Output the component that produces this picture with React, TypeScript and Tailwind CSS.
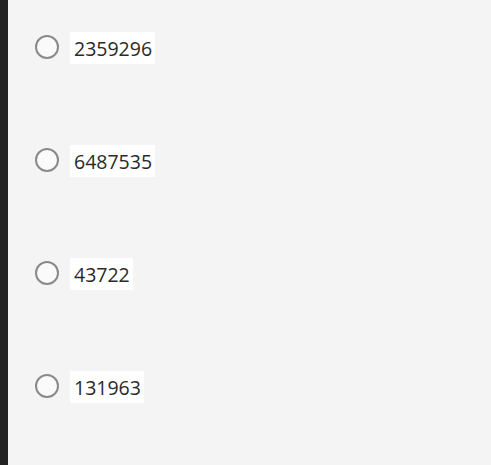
import React from 'react';

const options = ['2359296', '6487535', '43722', '131963'];

const RadioOption: React.FC<{ label: string }> = ({ label }) => (
  <label className="flex items-center gap-[11px] h-[32px]">
    <span className="w-[24px] h-[24px] rounded-full border-2 border-[#8a8a8a] bg-[#fafafa] -mt-[2px] shrink-0" />
    <span className="bg-white h-[32px] pl-[4px] pr-[3px] pt-[2px] flex items-center text-[19.5px] text-[#2a2a2a] leading-none">
      {label}
    </span>
  </label>
);

export default function App() {
  return (
    <div
      className="flex w-[491px] h-[465px] overflow-hidden"
      style={{ fontFamily: '"Open Sans", "Noto Sans", sans-serif' }}
    >
      <div className="w-[8px] bg-[#222222] shrink-0" />
      <div className="flex-1 bg-[#f4f4f4] pl-[27px] pt-[32px] flex flex-col gap-[81px]">
        {options.map((o) => (
          <RadioOption key={o} label={o} />
        ))}
      </div>
    </div>
  );
}
